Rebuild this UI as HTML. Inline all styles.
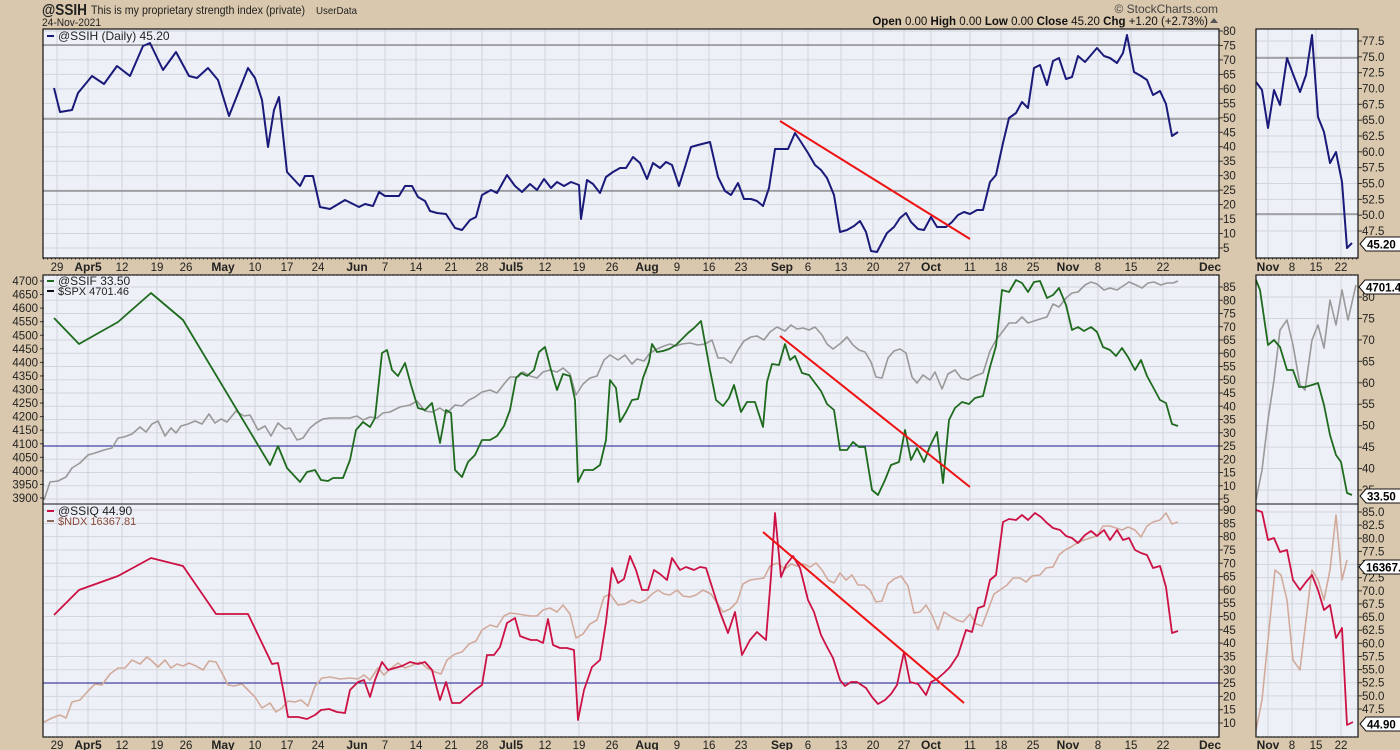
<!DOCTYPE html>
<html><head><meta charset="utf-8">
<style>
html,body{margin:0;padding:0;background:#d9c8ad;width:1400px;height:750px;overflow:hidden;font-family:"Liberation Sans",sans-serif;}
svg{position:absolute;left:0;top:0}
</style></head><body>
<svg id="s" width="1400" height="750" xmlns="http://www.w3.org/2000/svg" font-family="Liberation Sans, sans-serif">
<rect width="1400" height="750" fill="#d9c8ad"/>
<text x="42" y="15" font-size="16" font-weight="bold" fill="#222" textLength="45" lengthAdjust="spacingAndGlyphs">@SSIH</text>
<text x="91" y="14" font-size="12" fill="#222" textLength="214" lengthAdjust="spacingAndGlyphs">This is my proprietary strength index (private)</text>
<text x="316" y="14" font-size="10.5" fill="#222" textLength="41" lengthAdjust="spacingAndGlyphs">UserData</text>
<text x="42" y="26" font-size="11" fill="#222" textLength="59" lengthAdjust="spacingAndGlyphs">24-Nov-2021</text>
<text x="1218" y="13" font-size="12" fill="#444" text-anchor="end">© StockCharts.com</text>
<text x="1208" y="25" font-size="11.5" fill="#111" text-anchor="end"><tspan font-weight="bold">Open</tspan> 0.00  <tspan font-weight="bold">High</tspan> 0.00  <tspan font-weight="bold">Low</tspan> 0.00  <tspan font-weight="bold">Close</tspan> 45.20  <tspan font-weight="bold">Chg</tspan> +1.20 (+2.73%)</text>
<path d="M1210 23 l4 -5 l4 5z" fill="#555"/>
<g id="g"></g>
</svg>
<script>
var g=document.getElementById('g'),h='';
function P(a){var s='';for(var i=0;i<a.length;i+=2)s+=(i?' ':'')+a[i]+','+a[i+1];return s;}
function line(pts,c,w){h+='<polyline points="'+P(pts)+'" fill="none" stroke="'+c+'" stroke-width="'+(w||2)+'" stroke-linejoin="round"/>';}
var bg='#eef0f7',gc='#d3d5de';
var wk=[57,88,122,157,186,223,255,287,318,357,385,416,451,482,511,545,579,612,647,677,709,741,782,808,841,873,904,931,970,1001,1033,1068,1098,1131,1163,1210];
var wl=['29','Apr5','12','19','26','May','10','17','24','Jun','7','14','21','28','Jul5','12','19','26','Aug','9','16','23','Sep','6','13','20','27','Oct','11','18','25','Nov','8','15','22','Dec'];
var bold={'Apr5':1,'May':1,'Jun':1,'Jul5':1,'Aug':1,'Sep':1,'Oct':1,'Nov':1,'Dec':1};
var rk=[1268,1292,1316,1341],rl=['Nov','8','15','22'];
function panel(x0,x1,y0,y1,vx,hy){
 h+='<rect x="'+x0+'" y="'+y0+'" width="'+(x1-x0)+'" height="'+(y1-y0)+'" fill="'+bg+'"/>';
 vx.forEach(function(x){h+='<line x1="'+x+'" x2="'+x+'" y1="'+y0+'" y2="'+y1+'" stroke="'+gc+'"/>';});
 hy.forEach(function(y){h+='<line x1="'+x0+'" x2="'+x1+'" y1="'+y+'" y2="'+y+'" stroke="'+gc+'"/>';});
}
function border(x0,x1,y0,y1){h+='<rect x="'+x0+'" y="'+y0+'" width="'+(x1-x0)+'" height="'+(y1-y0)+'" fill="none" stroke="#111" stroke-width="1.2"/>';}
function hl(x0,x1,y,c){h+='<line x1="'+x0+'" x2="'+x1+'" y1="'+y+'" y2="'+y+'" stroke="'+c+'" stroke-width="1"/>';}
function labels(x,arr,yA,yB,anchor){var n=arr.length;for(var i=0;i<n;i++){var y=yA+(yB-yA)*i/(n-1);h+='<line x1="'+(anchor=='end'?x+2:x-4)+'" x2="'+(anchor=='end'?x+6:x)+'" y1="'+y+'" y2="'+y+'" stroke="#333"/>';h+='<text x="'+x+'" y="'+(y+4)+'" font-size="11.5" fill="#222" text-anchor="'+(anchor||'start')+'">'+arr[i]+'</text>';}}
function rng(a,b,s,d){var r=[];for(var v=a;v>=b-1e-9;v-=s)r.push(d?v.toFixed(d):String(v));return r;}
function hys(yA,yB,n){var r=[];for(var i=0;i<n;i++)r.push(yA+(yB-yA)*i/(n-1));return r;}
function dateStrip(y,x0,x1,ks,ls){h+='<line x1="'+x0+'" x2="'+x1+'" y1="'+y+'" y2="'+y+'" stroke="#333" stroke-dasharray="1,3"/>';
 for(var i=0;i<ks.length;i++){h+='<text x="'+ks[i]+'" y="'+(y+12)+'" font-size="'+(bold[ls[i]]?12:11.5)+'" '+(bold[ls[i]]?'font-weight="bold"':'')+' fill="#222" text-anchor="middle">'+ls[i]+'</text>';}}
function tag(x,y,t){h+='<path d="M'+x+' '+y+' l6 -7 h'+(t.length*7+3)+' v14 h-'+(t.length*7+3)+'z" fill="#fff" stroke="#111"/><text x="'+(x+7)+'" y="'+(y+4.5)+'" font-size="11.5" font-weight="bold" fill="#000">'+t+'</text>';}

panel(43,1219,29,258,wk.slice(0,35),hys(31,248,16));
panel(43,1219,275,504,wk.slice(0,35),hys(287,499,17));
panel(43,1219,504,737,wk.slice(0,35),hys(510,723,17));
panel(1256,1358,29,258,rk,hys(41,231,13));
panel(1256,1358,275,504,rk,hys(297,490,10));
panel(1256,1358,504,737,rk,hys(512,709,16));
hl(43,1219,45,'#666');hl(43,1219,119,'#666');hl(43,1219,191,'#666');
hl(43,1219,446,'#1a1a8c');hl(43,1219,683,'#1a1a8c');
hl(1256,1358,58,'#666');hl(1256,1358,214,'#666');
line([54,88,60,112,72,110,78,93,92,76,104,84,117,66,130,76,143,46,150,43,163,70,176,52,189,76,197,78,208,68,218,80,229,116,248,68,255,78,262,100,268,147,274,110,279,97,287,172,300,186,305,176,313,176,320,207,330,209,345,200,359,207,365,204,373,206,379,192,385,196,392,196,399,196,405,186,412,186,418,197,425,201,430,211,437,213,446,214,455,228,462,230,470,220,476,217,482,195,491,190,497,193,507,175,515,186,522,192,530,184,537,190,544,179,551,188,557,182,564,186,571,182,579,185,581,219,587,180,593,184,600,193,606,177,613,172,620,168,626,168,633,157,640,163,647,179,653,163,660,168,666,162,672,165,679,186,685,167,691,147,698,145,710,142,718,177,725,191,731,195,738,183,744,199,751,199,757,201,763,206,769,188,775,149,788,149,795,133,801,142,808,153,815,165,821,170,827,178,834,195,840,232,847,230,854,226,860,221,866,232,871,251,877,252,887,233,894,227,900,218,906,213,911,222,918,229,924,230,931,217,937,227,946,227,952,222,958,215,964,212,970,214,977,210,983,210,990,182,996,175,1003,143,1009,118,1016,113,1022,102,1028,108,1034,68,1040,65,1047,85,1053,61,1059,58,1066,79,1072,77,1078,56,1085,62,1091,55,1097,48,1104,56,1110,58,1117,63,1123,53,1127,35,1134,72,1141,76,1147,80,1153,95,1160,91,1166,104,1172,136,1178,132],'#1a1a7a');
line([780,121,970,239],'#ee1111',2);
line([44,500,50,482,58,481,66,477,72,468,80,463,88,455,95,453,104,450,112,448,118,438,124,437,132,434,140,427,146,432,152,424,158,421,165,436,171,428,176,433,181,426,188,424,195,421,202,424,209,414,215,423,221,419,227,422,236,411,244,416,250,415,258,430,265,426,271,436,278,423,285,429,290,428,297,440,303,438,310,428,316,423,323,419,330,418,340,418,350,418,357,416,363,420,370,417,377,418,383,413,390,412,400,407,410,405,417,401,425,411,432,412,440,408,447,413,455,405,462,406,469,400,475,397,482,392,490,390,497,393,504,384,510,377,518,377,523,372,530,376,537,378,543,372,550,370,557,372,563,368,570,374,576,395,583,384,590,378,597,376,604,360,610,355,618,360,625,355,632,364,637,359,644,361,650,353,657,349,664,346,670,344,676,346,682,344,690,343,698,345,705,344,712,340,718,358,724,358,731,363,738,350,744,341,751,337,757,336,764,340,770,332,777,327,785,331,791,325,797,329,803,328,809,330,815,327,822,335,827,344,833,349,841,343,847,337,853,345,859,350,865,352,871,362,876,377,882,378,888,358,894,351,900,349,906,353,912,377,917,383,923,375,930,380,935,372,942,389,948,374,955,370,961,378,968,380,975,376,983,373,990,351,996,340,1003,331,1009,323,1016,323,1022,317,1028,323,1034,321,1040,319,1047,317,1053,304,1059,307,1066,298,1072,293,1078,292,1085,285,1091,282,1097,284,1104,290,1110,288,1117,290,1123,286,1129,282,1136,285,1142,288,1148,283,1154,282,1161,285,1167,283,1173,283,1178,281],'#999',1.6);
line([54,318,79,344,118,322,151,293,183,320,270,465,278,446,287,468,300,482,307,472,315,470,321,480,328,481,333,478,343,478,350,460,356,430,363,422,370,427,375,418,382,353,387,350,392,370,398,376,405,363,411,385,418,408,425,410,432,403,440,443,446,410,451,413,455,470,462,477,468,462,475,455,482,440,490,440,497,436,504,426,510,410,516,378,521,373,527,376,534,370,539,352,545,347,551,370,557,390,563,374,570,376,575,400,578,482,584,470,593,470,600,465,606,440,610,380,616,388,620,422,626,412,632,400,638,399,643,378,649,362,652,344,657,352,663,351,669,349,676,345,682,339,688,333,694,328,701,321,710,370,716,400,723,406,729,398,734,385,741,412,747,402,755,402,763,427,767,382,772,364,779,365,785,344,790,360,795,356,802,373,809,375,815,383,821,391,827,404,834,410,840,450,847,450,853,442,859,447,865,447,872,490,878,495,885,480,891,465,899,462,905,430,911,460,917,448,924,462,930,446,937,432,943,483,949,420,955,408,962,402,969,404,975,398,983,396,990,367,996,346,1002,290,1009,292,1016,280,1022,283,1028,292,1034,282,1040,281,1047,298,1053,295,1059,288,1066,305,1072,330,1078,327,1084,331,1091,327,1097,332,1103,347,1110,350,1116,356,1122,348,1128,357,1135,370,1141,360,1147,376,1153,387,1160,400,1166,403,1172,424,1178,426],'#1e6b1e',1.8);
line([780,336,970,487],'#ee1111',2);
line([44,722,52,718,60,715,66,718,72,702,80,700,88,691,95,684,102,685,110,674,118,668,125,668,132,660,140,664,147,657,152,661,158,667,165,660,171,668,177,664,183,666,189,663,196,666,203,670,209,661,216,662,222,673,228,685,234,686,242,684,248,690,255,697,262,708,270,703,276,712,282,708,288,701,295,702,301,700,308,706,315,686,322,678,330,677,340,679,350,678,358,679,364,675,370,680,378,668,384,675,390,669,398,663,405,668,413,665,420,662,427,668,435,672,441,674,447,660,455,654,462,652,469,644,476,641,482,630,490,625,497,627,504,616,510,613,518,614,524,615,530,616,537,616,543,610,550,608,557,612,563,605,570,614,576,638,583,634,590,624,597,620,604,597,610,594,618,605,625,604,632,600,639,603,646,600,652,594,658,590,664,594,670,595,677,590,683,596,690,597,696,595,703,590,711,594,717,603,723,612,730,609,737,602,743,584,750,580,757,579,764,578,770,566,777,563,785,569,791,564,797,566,803,564,810,567,816,563,822,570,828,580,834,583,840,573,846,580,852,575,858,585,864,585,870,590,876,602,882,601,888,584,894,579,901,576,908,586,914,613,920,612,926,605,932,615,938,630,944,612,950,616,957,620,963,622,970,614,976,624,982,626,988,610,994,594,1000,590,1007,585,1013,578,1020,578,1026,582,1032,576,1040,575,1046,568,1053,567,1059,555,1065,550,1071,547,1077,543,1084,540,1090,538,1097,536,1103,526,1110,526,1116,528,1122,530,1128,527,1135,530,1141,537,1147,526,1153,522,1160,520,1166,513,1172,524,1178,522],'#d2aa9c',1.6);
line([54,615,79,590,118,576,151,558,183,566,216,614,248,614,272,664,278,663,284,694,288,717,298,717,307,719,315,715,321,710,329,709,337,712,345,713,350,690,358,682,364,680,370,697,375,680,382,662,388,670,395,668,402,666,410,662,418,664,425,662,432,670,440,700,446,682,452,703,460,703,467,697,475,690,482,685,487,655,494,655,500,647,507,623,515,618,520,636,525,638,531,640,537,640,543,643,548,619,553,645,560,648,567,648,574,650,578,720,584,690,592,667,600,660,606,622,612,568,618,583,624,579,630,556,636,570,642,590,648,590,654,570,660,574,667,580,672,558,680,570,686,567,694,570,700,567,706,568,713,590,720,612,728,633,735,612,742,655,750,640,757,632,766,640,771,576,775,513,781,577,786,565,793,556,800,568,808,600,814,612,821,635,826,645,833,658,840,680,845,686,851,682,857,682,866,688,872,697,878,704,885,700,891,694,897,685,904,652,910,682,918,684,926,695,931,682,937,679,944,673,950,667,958,655,966,630,972,632,978,608,984,606,990,580,996,575,1003,522,1009,519,1016,520,1022,515,1028,520,1035,513,1041,517,1047,523,1053,528,1060,530,1066,536,1072,538,1078,543,1085,535,1091,531,1097,536,1104,530,1110,540,1117,530,1123,540,1129,538,1135,550,1141,553,1147,555,1153,568,1160,566,1166,587,1172,633,1178,631],'#cc1144',1.8);
line([763,532,964,703],'#ee1111',2);
line([1256,82,1262,90,1268,128,1274,90,1280,105,1287,58,1293,74,1300,92,1306,75,1312,35,1318,117,1324,132,1330,163,1336,152,1342,182,1347,248,1352,243],'#1a1a7a');
line([1256,500,1262,470,1268,420,1274,380,1280,330,1287,320,1293,345,1300,385,1305,390,1312,340,1318,325,1324,348,1330,300,1336,325,1342,290,1348,320,1356,285],'#999',1.6);
line([1256,280,1260,290,1268,345,1274,340,1280,347,1287,370,1293,370,1299,387,1305,387,1312,385,1318,383,1324,405,1330,435,1336,455,1341,462,1347,493,1352,495],'#1e6b1e',1.8);
line([1256,730,1262,700,1268,640,1275,570,1281,575,1287,600,1293,660,1300,670,1306,620,1312,570,1318,580,1324,600,1330,570,1336,515,1342,580,1347,560],'#d2aa9c',1.6);
line([1256,510,1262,512,1268,540,1274,538,1280,552,1287,550,1293,580,1300,590,1306,582,1312,575,1318,590,1324,610,1330,605,1336,638,1342,628,1347,725,1353,722],'#cc1144',1.8);
border(43,1219,29,258);border(43,1219,275,737);hl(43,1219,504,'#111');
border(1256,1358,29,258);border(1256,1358,275,737);hl(1256,1358,504,'#111');
h+='<line x1="47" x2="54" y1="36" y2="36" stroke="#1a1a7a" stroke-width="2"/><text x="58" y="40" font-size="12" fill="#222">@SSIH (Daily) 45.20</text>';
h+='<line x1="47" x2="54" y1="281" y2="281" stroke="#1e6b1e" stroke-width="2"/><text x="58" y="285" font-size="12" fill="#222">@SSIF 33.50</text>';
h+='<line x1="47" x2="54" y1="291" y2="291" stroke="#111" stroke-width="2"/><text x="58" y="295" font-size="11" fill="#222">$SPX 4701.46</text>';
h+='<line x1="47" x2="54" y1="511" y2="511" stroke="#cc1144" stroke-width="2"/><text x="58" y="515" font-size="12" fill="#222">@SSIQ 44.90</text>';
h+='<line x1="47" x2="54" y1="521" y2="521" stroke="#8a6a5a" stroke-width="2"/><text x="58" y="525" font-size="11" fill="#8a4a3a">$NDX 16367.81</text>';
labels(1223,rng(80,5,5),31,248);
labels(1223,rng(85,5,5),287,499);
labels(1223,rng(90,10,5),510,723);
labels(38,rng(4700,3900,50),281,498,'end');
labels(1362,rng(77.5,47.5,2.5,1),41,231);
labels(1362,rng(80,35,5),297,490);
labels(1362,rng(85,47.5,2.5,1),512,709);
dateStrip(259,43,1219,wk,wl);dateStrip(275,43,1219,[],[]);
dateStrip(737,43,1219,wk,wl);
dateStrip(259,1256,1358,rk,rl);dateStrip(275,1256,1358,[],[]);
dateStrip(737,1256,1358,rk,rl);
tag(1360,244,'45.20');tag(1359,287,'4701.46');tag(1360,496,'33.50');tag(1359,567,'16367.8');tag(1360,724,'44.90');
g.innerHTML=h;
</script>
</body></html>
